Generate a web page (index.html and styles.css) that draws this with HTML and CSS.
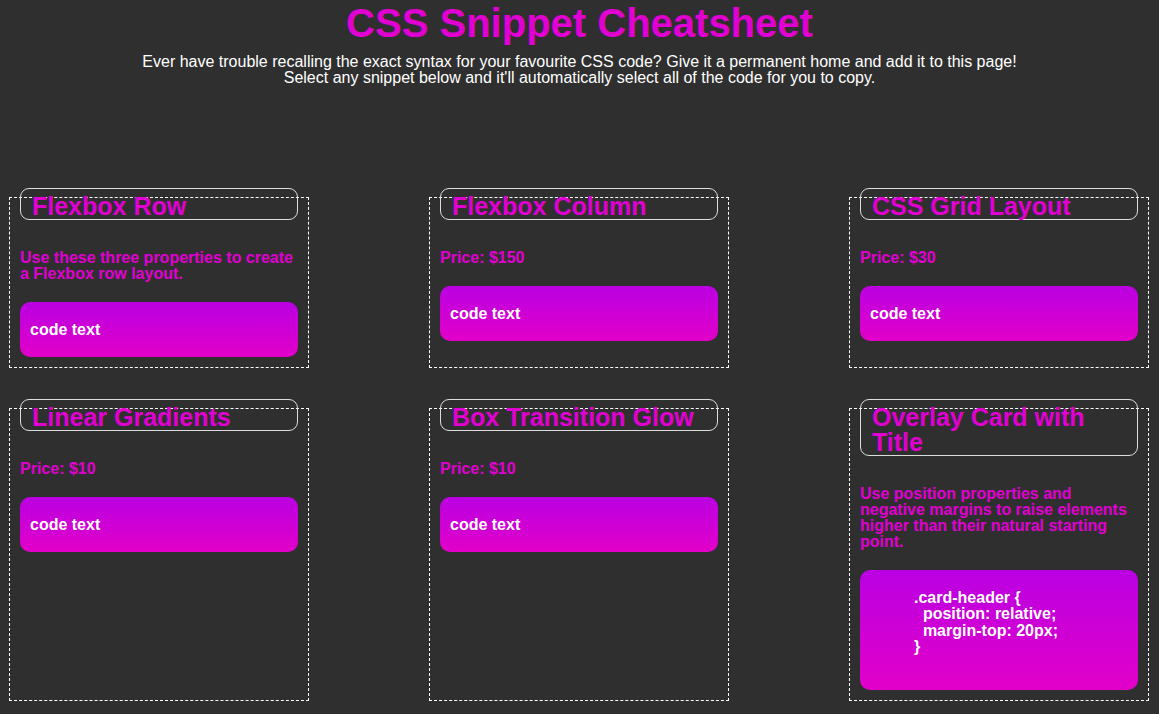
FILE: index.html
```html
<!DOCTYPE html>
<html lang="en">
<head>
<meta charset="utf-8">
<title>CSS Snippet Cheatsheet</title>
<link rel="stylesheet" href="styles.css">
</head>
<body>
<header class="intro">
  <h1 class="page-title">CSS Snippet Cheatsheet</h1>
  <p class="lead">Ever have trouble recalling the exact syntax for your favourite CSS code? Give it a permanent home and add it to this page!<br>Select any snippet below and it'll automatically select all of the code for you to copy.</p>
</header>
<main class="grid">
  <section class="card">
    <h2 class="card-header">Flexbox Row</h2>
    <p class="card-desc">Use these three properties to create a Flexbox row layout.</p>
    <div class="code">code text</div>
  </section>
  <section class="card">
    <h2 class="card-header">Flexbox Column</h2>
    <p class="card-desc">Price: $150</p>
    <div class="code">code text</div>
  </section>
  <section class="card">
    <h2 class="card-header">CSS Grid Layout</h2>
    <p class="card-desc">Price: $30</p>
    <div class="code">code text</div>
  </section>
  <section class="card">
    <h2 class="card-header">Linear Gradients</h2>
    <p class="card-desc">Price: $10</p>
    <div class="code">code text</div>
  </section>
  <section class="card">
    <h2 class="card-header">Box Transition Glow</h2>
    <p class="card-desc">Price: $10</p>
    <div class="code">code text</div>
  </section>
  <section class="card">
    <h2 class="card-header">Overlay Card with Title</h2>
    <p class="card-desc">Use position properties and negative margins to raise elements higher than their natural starting point.</p>
    <pre class="code code-block">.card-header {
  position: relative;
  margin-top: 20px;
}</pre>
  </section>
</main>
</body>
</html>
```
FILE: styles.css
```css
html, body {
  margin: 0;
  padding: 0;
}
body {
  background: #2f2f2f;
  font-family: "Liberation Sans", Arial, Helvetica, sans-serif;
  color: #ffffff;
}
.intro {
  text-align: center;
  padding-top: 1px;
}
.page-title {
  margin: 0;
  font-size: 40px;
  line-height: 44px;
  font-weight: bold;
  color: #e000d2;
}
.lead {
  margin: 9px 0 0;
  font-size: 16px;
  line-height: 16px;
}
.grid {
  display: grid;
  grid-template-columns: repeat(3, 300px);
  column-gap: 120px;
  row-gap: 40px;
  padding: 111px 0 12px 9px;
}
.card {
  border: 1px dashed #ffffff;
  padding: 0 10px 10px;
  display: flex;
  flex-direction: column;
}
.card-header {
  margin: -10px 0 0;
  border: 1px solid #dddddd;
  border-radius: 9px;
  padding: 5px 11px 0;
  font-size: 25px;
  line-height: 25px;
  font-weight: bold;
  color: #e000d2;
}
.card-desc {
  margin: 30px 0 20px;
  font-size: 16px;
  line-height: 16px;
  font-weight: bold;
  color: #e000d2;
}
.code {
  margin: 0;
  background: linear-gradient(#ba00e2, #e200c8);
  border-radius: 10px;
  padding: 20px 10px 19px;
  font-family: "Liberation Sans", Arial, Helvetica, sans-serif;
  font-size: 16px;
  line-height: 16px;
  font-weight: bold;
  color: #ffffff;
}
.code-block {
  white-space: pre;
  padding: 20px 10px 35px 54px;
  line-height: 16.3px;
}
```
